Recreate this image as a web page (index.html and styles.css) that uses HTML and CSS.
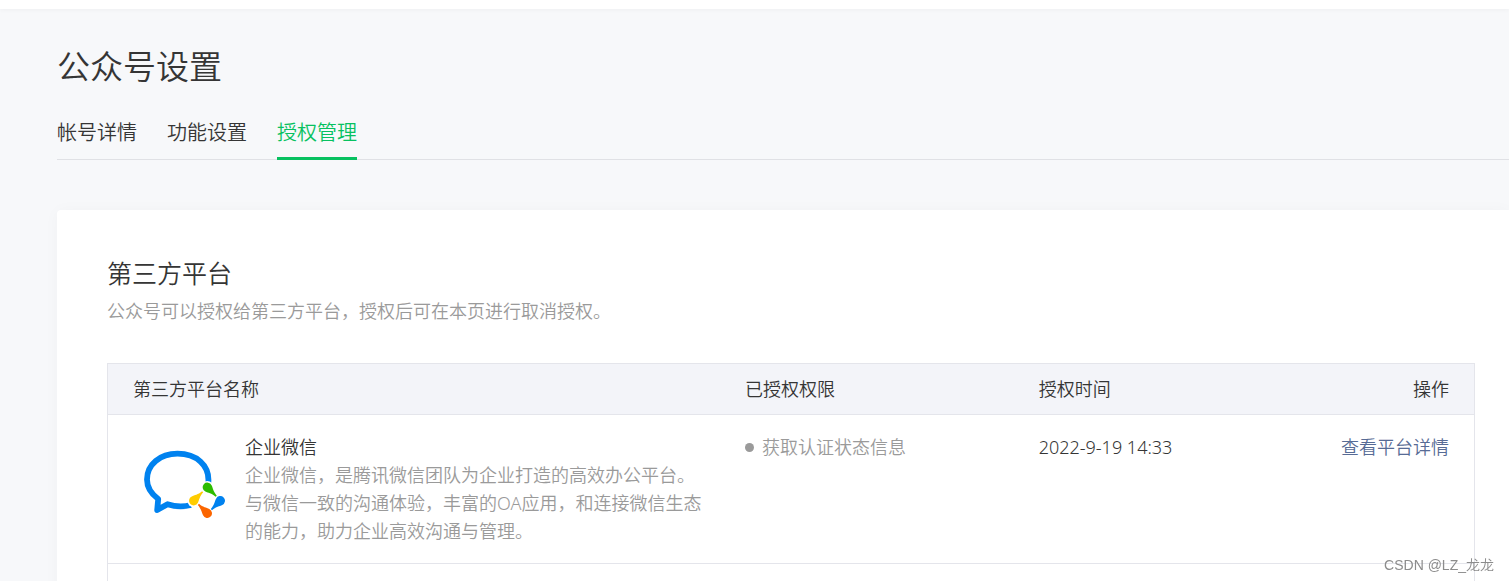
FILE: index.html
```html
<!DOCTYPE html>
<html lang="zh-CN">
<head>
<meta charset="utf-8">
<title>公众号设置</title>
<link rel="stylesheet" href="styles.css">
</head>
<body>
<div class="topbar"></div>
<main class="page">
  <h1 class="page-title">公众号设置</h1>
  <nav class="tabs">
    <a class="tab" href="#detail">帐号详情</a>
    <a class="tab" href="#function">功能设置</a>
    <a class="tab tab-active" href="#auth" aria-current="page">授权管理</a>
  </nav>
  <section class="panel">
    <h2 class="panel-title">第三方平台</h2>
    <p class="panel-desc">公众号可以授权给第三方平台，授权后可在本页进行取消授权。</p>
    <table class="table">
      <thead>
        <tr>
          <th class="col-name" scope="col">第三方平台名称</th>
          <th class="col-scope" scope="col">已授权权限</th>
          <th class="col-time" scope="col">授权时间</th>
          <th class="col-action" scope="col">操作</th>
        </tr>
      </thead>
      <tbody>
        <tr>
          <td>
            <div class="platform">
              <svg class="platform-logo" viewBox="0 0 100 100" aria-hidden="true">
                <defs>
                  <path id="drop" d="M-4.7 0A4.7 4.7 0 0 1 1.6 -4.4C4.8 -3.400 7 -1.2 12.6 -0.800V0.800C7 1.2 4.8 3.400 1.6 4.4A4.7 4.7 0 0 1 -4.7 0Z"/>
                </defs>
                <path d="M75.300 50C77 32 63 20.700 44.500 20.700C27 20.700 14 31.500 14 46.500C14 54.500 18.500 61 25.200 66L24.200 77L34.500 71.200C42 73.600 51 73.800 58 72" fill="none" stroke="#0082ef" stroke-width="5.8" stroke-linejoin="round"/>
                <circle cx="60.7" cy="67.7" r="6.3" fill="#fff"/>
                <circle cx="74.3" cy="54.3" r="6.3" fill="#fff"/>
                <use href="#drop" transform="translate(74.3 54.3) rotate(45)" fill="#2dbc00"/>
                <use href="#drop" transform="translate(87.3 67.7) rotate(135)" fill="#0082ef"/>
                <use href="#drop" transform="translate(74.3 80.3) rotate(225)" fill="#fb6500"/>
                <use href="#drop" transform="translate(60.7 67.7) rotate(315)" fill="#fc0"/>
              </svg>
              <div class="platform-info">
                <strong class="platform-name">企业微信</strong>
                <p class="platform-desc">企业微信，是腾讯微信团队为企业打造的高效办公平台。<br>与微信一致的沟通体验，丰富的OA应用，和连接微信生态的能力，助力企业高效沟通与管理。</p>
              </div>
            </div>
          </td>
          <td><ul class="scopes"><li class="scope">获取认证状态信息</li></ul></td>
          <td>2022-9-19 14:33</td>
          <td class="col-action"><a class="link" href="#platform">查看平台详情</a></td>
        </tr>
        <tr><td></td><td></td><td></td><td></td></tr>
      </tbody>
    </table>
  </section>
</main>
<div class="watermark">CSDN @LZ_龙龙</div>
</body>
</html>
```
FILE: styles.css
```css
* {
  box-sizing: border-box;
}

body {
  margin: 0;
  height: 100vh;
  overflow: hidden;
  background: #f7f8fa;
  color: #353535;
  font-family: "Noto Sans", "Noto Sans CJK SC", sans-serif;
  font-size: 18px;
  font-weight: 350;
  line-height: 28px;
}

h1, h2, p, ul {
  margin: 0;
  padding: 0;
  font-weight: inherit;
}

.topbar {
  height: 9px;
  background: #fff;
  box-shadow: 0 1px 5px rgba(0, 0, 0, 0.04);
}

.page {
  padding: 32px 0 0 57px;
}

.page-title {
  font-size: 33px;
  line-height: 52px;
}

.tabs {
  display: flex;
  gap: 30px;
  margin-top: 16px;
  border-bottom: 1px solid #e0e1e5;
}

.tab {
  height: 51px;
  margin-bottom: -1px;
  border-bottom: 3px solid transparent;
  color: inherit;
  font-size: 20px;
  line-height: 48px;
  text-decoration: none;
}

.tab-active {
  border-color: #07c160;
  color: #07c160;
}

.panel {
  margin-top: 50px;
  padding: 43px 34px 0 50px;
  border-radius: 4px 0 0 0;
  background: #fff;
  box-shadow: 0 1px 16px rgba(0, 0, 0, 0.03);
}

.panel-title {
  font-size: 25px;
  line-height: 40px;
}

.panel-desc {
  margin-top: 4px;
  color: #9a9a9a;
}

.table {
  width: 100%;
  margin-top: 38px;
  border: 1px solid #e4e5eb;
  border-spacing: 0;
  table-layout: fixed;
}

.table th,
.table td {
  padding: 18px 0 18px 25px;
  border-bottom: 1px solid #e4e5eb;
  text-align: left;
  vertical-align: top;
  font-weight: inherit;
}

.table th {
  padding-top: 11px;
  padding-bottom: 11px;
  background: #f3f4f9;
}

.table .col-name {
  width: 44.8%;
}

.table .col-scope,
.table .col-time {
  width: 21.5%;
}

.table .col-action {
  padding-right: 25px;
  padding-left: 0;
  text-align: right;
}

.platform {
  display: flex;
  gap: 12px;
  padding-right: 10px;
}

.platform-logo {
  flex: none;
  width: 100px;
  height: 100px;
}

.platform-name {
  display: block;
  font-weight: inherit;
}

.platform-desc {
  color: #9a9a9a;
}

.scopes {
  list-style: none;
}

.scope {
  display: flex;
  align-items: center;
  gap: 8px;
  color: #9a9a9a;
}

.scope::before {
  content: "";
  width: 9px;
  height: 9px;
  border-radius: 50%;
  background: #9a9a9a;
}

.link {
  color: #576b95;
  text-decoration: none;
}

.watermark {
  position: fixed;
  right: 15px;
  bottom: 6px;
  color: #8c8c8c;
  font-family: "Liberation Sans", "Noto Sans CJK SC", sans-serif;
  font-size: 14px;
  line-height: 20px;
}
```
